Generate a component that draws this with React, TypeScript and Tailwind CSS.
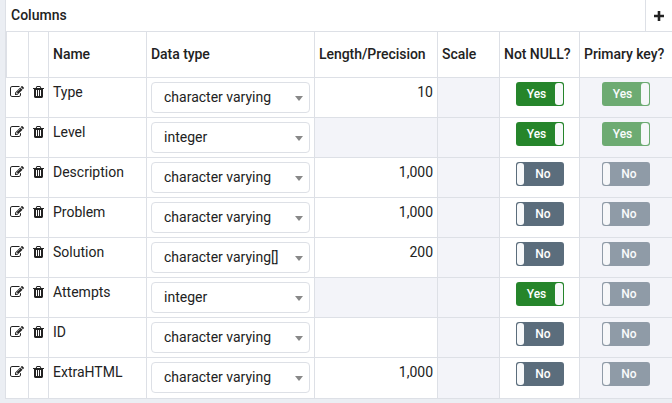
type Column = { name: string; type: string; length: string | null; notNull: boolean; primary: boolean };

const columns: Column[] = [
  { name: 'Type', type: 'character varying', length: '10', notNull: true, primary: true },
  { name: 'Level', type: 'integer', length: null, notNull: true, primary: true },
  { name: 'Description', type: 'character varying', length: '1,000', notNull: false, primary: false },
  { name: 'Problem', type: 'character varying', length: '1,000', notNull: false, primary: false },
  { name: 'Solution', type: 'character varying[]', length: '200', notNull: false, primary: false },
  { name: 'Attempts', type: 'integer', length: null, notNull: true, primary: false },
  { name: 'ID', type: 'character varying', length: '', notNull: false, primary: false },
  { name: 'ExtraHTML', type: 'character varying', length: '1,000', notNull: false, primary: false },
];

const grid = 'grid grid-cols-[23px_20px_98px_168px_123px_62px_80px_93px]';
const cell = 'border-r border-b border-[#dde0e6]';

function EditIcon() {
  return (
    <svg viewBox="0 0 1792 1792" className="size-3.5 shrink-0" fill="currentColor">
      <path d="M888 1184l116-116-152-152-116 116v56h96v96h56zm440-720q-16-16-33 1l-350 350q-17 17-1 33t33-1l350-350q17-17 1-33zm80 594v190q0 119-84.5 203.5t-203.5 84.5h-832q-119 0-203.5-84.5t-84.5-203.5v-832q0-119 84.5-203.5t203.5-84.5h832q63 0 117 25 15 7 18 23 3 17-9 29l-49 49q-14 14-32 8-23-6-45-6h-832q-66 0-113 47t-47 113v832q0 66 47 113t113 47h832q66 0 113-47t47-113v-126q0-13 9-22l64-64q15-15 35-7t20 29zm-96-738l288 288-672 672h-288v-288zm444 132l-92 92-288-288 92-92q28-28 68-28t68 28l152 152q28 28 28 68t-28 68z" />
    </svg>
  );
}

function TrashIcon() {
  return (
    <svg viewBox="192 0 1408 1792" className="h-3.5 w-[11px] shrink-0" fill="currentColor">
      <path d="M704 1376v-704q0-14-9-23t-23-9h-64q-14 0-23 9t-9 23v704q0 14 9 23t23 9h64q14 0 23-9t9-23zm256 0v-704q0-14-9-23t-23-9h-64q-14 0-23 9t-9 23v704q0 14 9 23t23 9h64q14 0 23-9t9-23zm256 0v-704q0-14-9-23t-23-9h-64q-14 0-23 9t-9 23v704q0 14 9 23t23 9h64q14 0 23-9t9-23zm-544-992h448l-48-117q-7-9-17-11h-317q-10 2-17 11zm928 32v64q0 14-9 23t-23 9h-96v948q0 83-47 143.5t-113 60.5h-832q-66 0-113-58.5t-47-141.5v-952h-96q-14 0-23-9t-9-23v-64q0-14 9-23t23-9h309l70-167q15-37 54-63t79-26h320q40 0 79 26t54 63l70 167h309q14 0 23 9t9 23z" />
    </svg>
  );
}

function Toggle({ on, disabled }: { on: boolean; disabled?: boolean }) {
  return (
    <div
      className={`flex h-6 w-12 rounded-[3px] p-px text-xs leading-[22px] font-medium text-white ${
        on ? 'bg-[#26852b]' : 'flex-row-reverse bg-[#5b6d7c]'
      } ${disabled ? 'opacity-65' : ''}`}
    >
      <span className={`flex-1 text-center ${on ? 'pl-px' : 'pr-px'}`}>{on ? 'Yes' : 'No'}</span>
      <span className={`rounded-[3px] bg-[#f8f9fa] ${on ? 'w-2' : 'w-[7px]'}`} />
    </div>
  );
}

function Row({ column, last }: { column: Column; last: boolean }) {
  return (
    <div className={`${grid} ${last ? 'h-[41px]' : 'h-10'}`}>
      <div className={`${cell} pt-[7px] pl-1`}>
        <EditIcon />
      </div>
      <div className={`${cell} pt-[7px] pl-1`}>
        <TrashIcon />
      </div>
      <div className={`${cell} pt-1 pl-1 leading-[21px]`}>{column.name}</div>
      <div className={`${cell} pt-1 pl-1`}>
        <div className="flex h-[31px] w-[159px] items-center justify-between rounded border border-[#dde0e6] pr-1.5 pl-3">
          <span className="pb-0.5">{column.type}</span>
          <span className="mt-0.5 border-x-4 border-t-[5px] border-x-transparent border-t-[#888]" />
        </div>
      </div>
      <div className={`${cell} pt-1 pr-1 text-right leading-[21px] ${column.length === null ? 'bg-[#f3f4f9]' : ''}`}>
        {column.length}
      </div>
      <div className={`${cell} bg-[#f3f4f9]`} />
      <div className={`${cell} pt-1 pl-4`}>
        <Toggle on={column.notNull} />
      </div>
      <div className="border-b border-[#dde0e6] bg-[#f3f4f9] pt-1 pl-[22px]">
        <Toggle on={column.primary} disabled />
      </div>
    </div>
  );
}

export default function App() {
  return (
    <div className="h-[403px] w-[672px] overflow-hidden bg-[#ebeef3] pl-[5px] font-[Roboto,sans-serif] text-sm text-[#222]">
      <div className="w-[667px] border-l border-[#dde0e6] bg-white">
        <div className="flex h-8 border-b border-[#dde0e6] font-medium">
          <div className="flex-1 pl-[5px] leading-[31px]">Columns</div>
          <div className="flex w-[27px] items-center border-l border-[#dde0e6] pl-2">
            <svg viewBox="0 0 10 10" className="size-2.5" fill="currentColor">
              <path d="M3.7 0h2.6v3.7H10v2.6H6.3V10H3.7V6.3H0V3.7h3.7z" />
            </svg>
          </div>
        </div>
        <div className={`${grid} h-[46px] leading-[45px] font-medium tracking-[-0.05px] whitespace-nowrap`}>
          <div className={`${cell} border-l`} />
          <div className={cell} />
          {['Name', 'Data type', 'Length/Precision', 'Scale', 'Not NULL?'].map((title) => (
            <div key={title} className={`${cell} pl-1`}>
              {title}
            </div>
          ))}
          <div className="border-b border-[#dde0e6] pl-1">Primary key?</div>
        </div>
        {columns.map((column, index) => (
          <Row key={column.name} column={column} last={index === columns.length - 1} />
        ))}
      </div>
    </div>
  );
}
